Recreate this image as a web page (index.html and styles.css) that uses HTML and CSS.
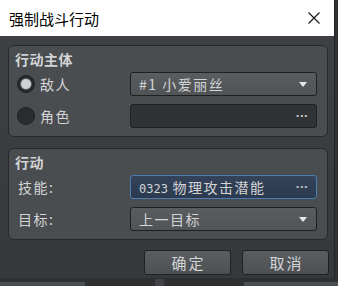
FILE: index.html
```html
<!DOCTYPE html>
<html lang="zh">
<head>
  <meta charset="UTF-8" />
  <title>强制战斗行动</title>
  <link rel="stylesheet" href="styles.css">
</head>
<body>
  <div class="pantalla">
    <div class="ventana">
      <div class="titulo">
        <span>强制战斗行动</span>
        <svg class="cerrar" width="12" height="12" viewBox="0 0 12 12">
          <path d="M0.5 0.5 L11.5 11.5 M11.5 0.5 L0.5 11.5" stroke="#111" stroke-width="1.1" fill="none"/>
        </svg>
      </div>

      <div class="cuerpo">
        <!-- grupo: actor -->
        <div class="grupo">
          <div class="grupo-titulo">行动主体</div>
          <div class="fila">
            <label class="radio"><span class="punto activo"></span>敌人</label>
            <div class="combo"><span>#1 小爱丽丝</span><span class="flecha"></span></div>
          </div>
          <div class="fila">
            <label class="radio"><span class="punto"></span>角色</label>
            <div class="campo"><span></span><span class="puntos">···</span></div>
          </div>
        </div>

        <!-- grupo: accion -->
        <div class="grupo grupo-accion">
          <div class="grupo-titulo">行动</div>
          <div class="fila">
            <label class="etiqueta">技能:</label>
            <div class="campo foco"><span><span class="mono">0323</span> 物理攻击潜能</span><span class="puntos">···</span></div>
          </div>
          <div class="fila">
            <label class="etiqueta">目标:</label>
            <div class="combo"><span>上一目标</span><span class="flecha"></span></div>
          </div>
        </div>

        <div class="botones">
          <button>确定</button>
          <button>取消</button>
        </div>
      </div>
    </div>
    <div class="fondo-derecha"></div>
  </div>
  <div class="fondo-abajo">
    <span class="raya r1"></span>
    <span class="raya r2"></span>
    <span class="raya r3"></span>
  </div>
</body>
</html>
```

FILE: styles.css
```css
body {
  margin: 0;
  width: 338px;
  height: 286px;
  overflow: hidden;
  background: #2b2d2f;
  font-family: "Noto Sans CJK SC", "DejaVu Sans", sans-serif;
  font-size: 14px;
  color: #d2d4d6;
}

.pantalla {
  display: flex;
  height: 278px;
}

.ventana {
  width: 334px;
  display: flex;
  flex-direction: column;
  background: linear-gradient(#3f4245, #36383b);
}

.fondo-derecha {
  width: 3px;
  background: #2f3133;
  border-left: 1px solid #232527;
}

.titulo {
  height: 36px;
  flex-shrink: 0;
  background: #ffffff;
  color: #000;
  font-size: 15px;
  display: flex;
  align-items: center;
  justify-content: space-between;
  padding: 0 14px 0 9px;
}

.cerrar {
  display: block;
}

.cuerpo {
  padding: 9px 6px 0 8px;
}

.grupo {
  border: 1px solid #26282b;
  border-radius: 6px;
  background: #4a4d50;
  padding: 3px 10px 8px 6px;
}

.grupo-accion {
  margin-top: 11px;
}

.grupo-titulo {
  font-weight: bold;
  height: 21px;
  line-height: 21px;
  letter-spacing: 0.5px;
}

.fila {
  display: flex;
  align-items: center;
  justify-content: space-between;
  height: 24px;
  margin-top: 8px;
}

.grupo-titulo + .fila {
  margin-top: 2px;
}

.radio, .etiqueta {
  display: flex;
  align-items: center;
  gap: 5px;
  letter-spacing: 1.5px;
}

.etiqueta {
  padding-left: 3px;
}

.punto {
  width: 18px;
  height: 18px;
  border-radius: 50%;
  background: #2a2c2e;
  border: 1px solid #1f2123;
  box-sizing: border-box;
  margin-left: 2px;
}

.punto.activo {
  background: radial-gradient(circle, #cfd1d3 0 4px, #a9acae 5px, #27292b 6px);
}

.combo, .campo {
  width: 187px;
  height: 24px;
  box-sizing: border-box;
  border: 1px solid #1e2022;
  border-radius: 3px;
  display: flex;
  align-items: center;
  justify-content: space-between;
  padding: 0 8px 0 8px;
  letter-spacing: 1.5px;
}

.combo {
  background: linear-gradient(#5a5d60, #515457);
}

.campo {
  background: #303336;
}

.campo.foco {
  background: linear-gradient(#34435a, #2c3a4f);
  border: 1px solid #4b7db6;
}

.mono {
  font-family: "DejaVu Sans Mono", monospace;
  font-size: 12px;
  letter-spacing: 0;
}

.flecha {
  width: 0;
  height: 0;
  border-left: 4px solid transparent;
  border-right: 4px solid transparent;
  border-top: 5px solid #e6e8ea;
  margin-right: 1px;
}

.puntos {
  font-family: "DejaVu Sans", sans-serif;
  color: #b8bcc0;
  font-size: 11px;
  letter-spacing: 0;
  font-weight: bold;
}

.botones {
  display: flex;
  justify-content: flex-end;
  gap: 11px;
  margin-top: 10px;
  margin-right: -1px;
}

.botones button {
  width: 87px;
  height: 25px;
  border: 1px solid #1f2123;
  border-radius: 3px;
  background: linear-gradient(#5a5d60, #4e5154);
  color: #d2d4d6;
  font-family: "Noto Sans CJK SC", sans-serif;
  font-size: 15px;
  letter-spacing: 2px;
  padding: 0 0 0 2px;
}

.fondo-abajo {
  height: 8px;
  background: #2d2f31;
  display: flex;
  align-items: flex-end;
}

.raya {
  height: 4px;
  background: #6a6d70;
  opacity: 0.5;
}

.r1 { width: 90px; margin-left: 0; }
.r2 { width: 10px; margin-left: 70px; background: #55585b; height: 7px; }
.r3 { width: 100px; margin-left: 80px; }
```
